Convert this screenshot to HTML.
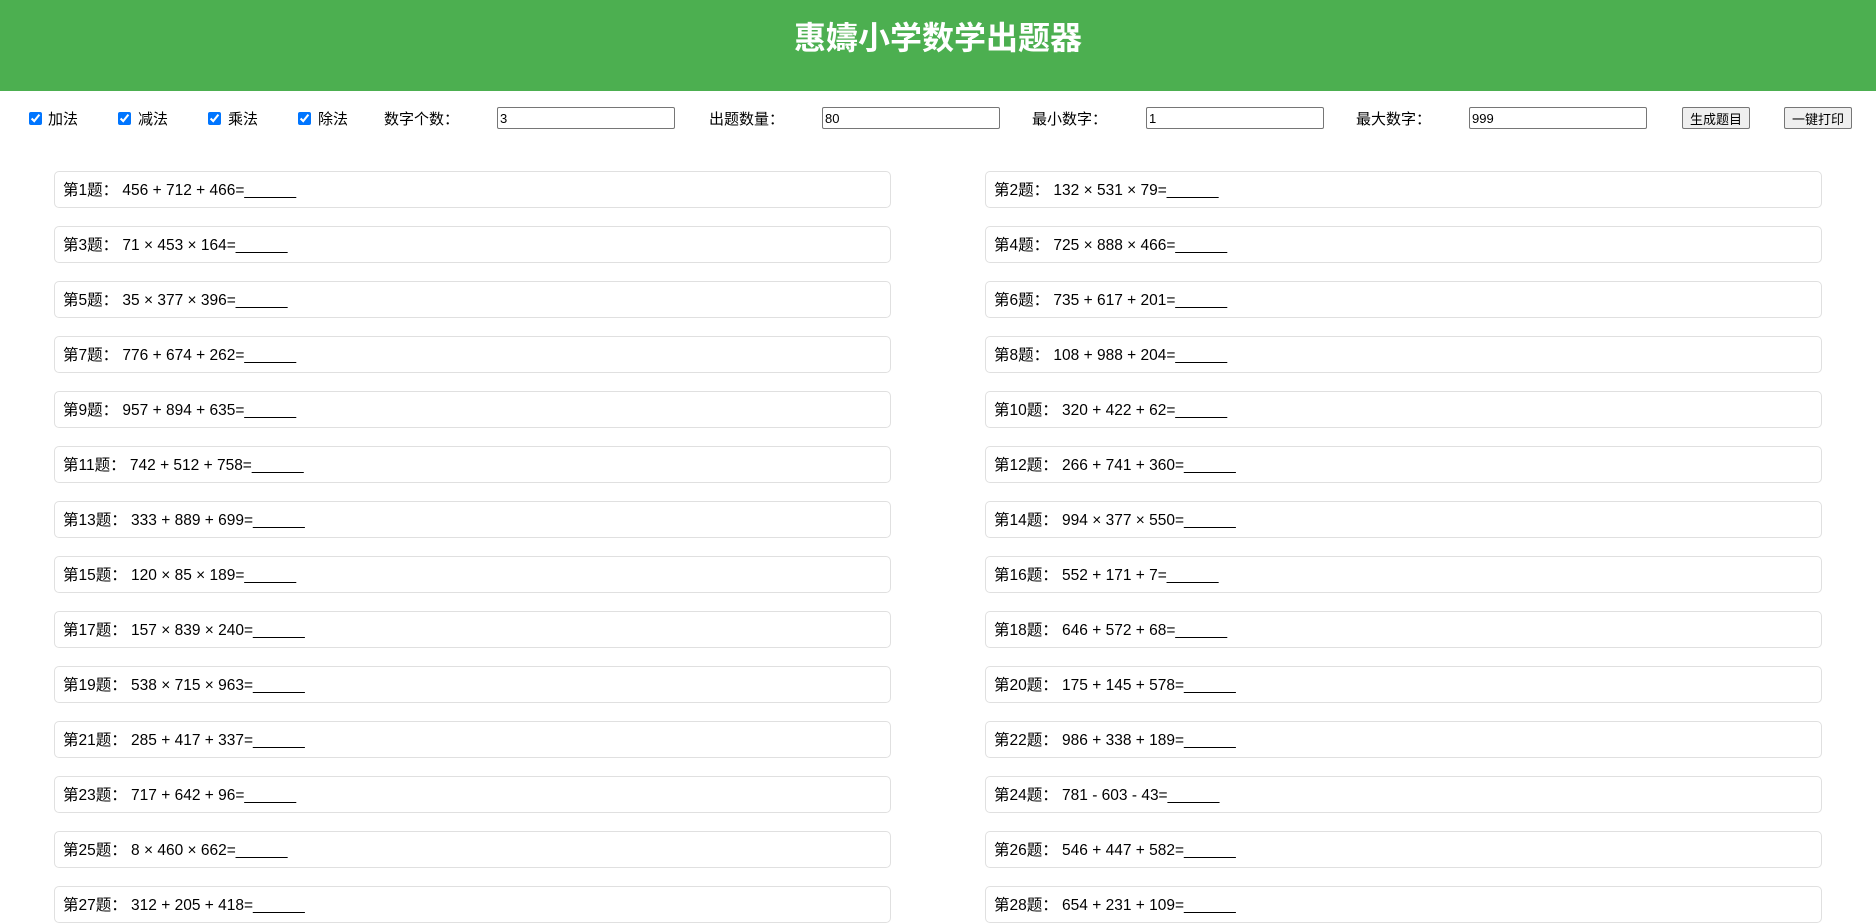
<!DOCTYPE html>
<html><head><meta charset="utf-8"><style>
*{box-sizing:border-box}
body{margin:0;width:1876px;height:890px;overflow:hidden;background:#fff;font-family:"Liberation Sans","Noto Sans CJK SC",sans-serif;color:#000}
.hd{height:91px;background:#4CAF50;color:#fff;text-align:center}
.hd h1{margin:0;padding-top:19px;font-size:32px;line-height:38px;font-weight:bold}
.ctl>*{position:absolute}
.lb{font-size:15px;top:110px;line-height:20px}
.cb{top:112px;width:13px;height:13px;margin:0}
input.t{top:107px;height:22px;width:178px;border:1px solid #767676;border-radius:2px;font-size:13px;padding:1px 2px;font-family:"Liberation Sans",sans-serif}
button{top:107px;height:22px;width:68px;font-size:13px;padding:0;border:1px solid #767676;border-radius:2px;background:#efefef;font-family:"Liberation Sans","Noto Sans CJK SC",sans-serif}
.grid{position:absolute;top:171px;left:54px;width:1768px;display:grid;grid-template-columns:837px 837px;column-gap:94px;row-gap:18px}
.c{height:37px;border:1px solid #e0e0e0;border-radius:5px;padding:1px 8px 0;font-size:15.5px;line-height:35px}
</style></head><body>
<div class="hd"><h1>惠嬦小学数学出题器</h1></div>
<div class="ctl" style="position:absolute;top:0;left:0;width:1876px">
<input type="checkbox" class="cb" checked style="left:29px"><span class="lb" style="left:48px">加法</span>
<input type="checkbox" class="cb" checked style="left:118px"><span class="lb" style="left:138px">减法</span>
<input type="checkbox" class="cb" checked style="left:208px"><span class="lb" style="left:228px">乘法</span>
<input type="checkbox" class="cb" checked style="left:298px"><span class="lb" style="left:318px">除法</span>
<span class="lb" style="left:384px">数字个数：</span><input class="t" style="left:497px" value="3">
<span class="lb" style="left:709px">出题数量：</span><input class="t" style="left:822px" value="80">
<span class="lb" style="left:1032px">最小数字：</span><input class="t" style="left:1146px" value="1">
<span class="lb" style="left:1356px">最大数字：</span><input class="t" style="left:1469px" value="999">
<button style="left:1682px">生成题目</button>
<button style="left:1784px">一键打印</button>
</div>
<div class="grid">
<div class="c">第1题： 456 + 712 + 466=______</div><div class="c">第2题： 132 × 531 × 79=______</div>
<div class="c">第3题： 71 × 453 × 164=______</div><div class="c">第4题： 725 × 888 × 466=______</div>
<div class="c">第5题： 35 × 377 × 396=______</div><div class="c">第6题： 735 + 617 + 201=______</div>
<div class="c">第7题： 776 + 674 + 262=______</div><div class="c">第8题： 108 + 988 + 204=______</div>
<div class="c">第9题： 957 + 894 + 635=______</div><div class="c">第10题： 320 + 422 + 62=______</div>
<div class="c">第11题： 742 + 512 + 758=______</div><div class="c">第12题： 266 + 741 + 360=______</div>
<div class="c">第13题： 333 + 889 + 699=______</div><div class="c">第14题： 994 × 377 × 550=______</div>
<div class="c">第15题： 120 × 85 × 189=______</div><div class="c">第16题： 552 + 171 + 7=______</div>
<div class="c">第17题： 157 × 839 × 240=______</div><div class="c">第18题： 646 + 572 + 68=______</div>
<div class="c">第19题： 538 × 715 × 963=______</div><div class="c">第20题： 175 + 145 + 578=______</div>
<div class="c">第21题： 285 + 417 + 337=______</div><div class="c">第22题： 986 + 338 + 189=______</div>
<div class="c">第23题： 717 + 642 + 96=______</div><div class="c">第24题： 781 - 603 - 43=______</div>
<div class="c">第25题： 8 × 460 × 662=______</div><div class="c">第26题： 546 + 447 + 582=______</div>
<div class="c">第27题： 312 + 205 + 418=______</div><div class="c">第28题： 654 + 231 + 109=______</div>
</div>
</body></html>
